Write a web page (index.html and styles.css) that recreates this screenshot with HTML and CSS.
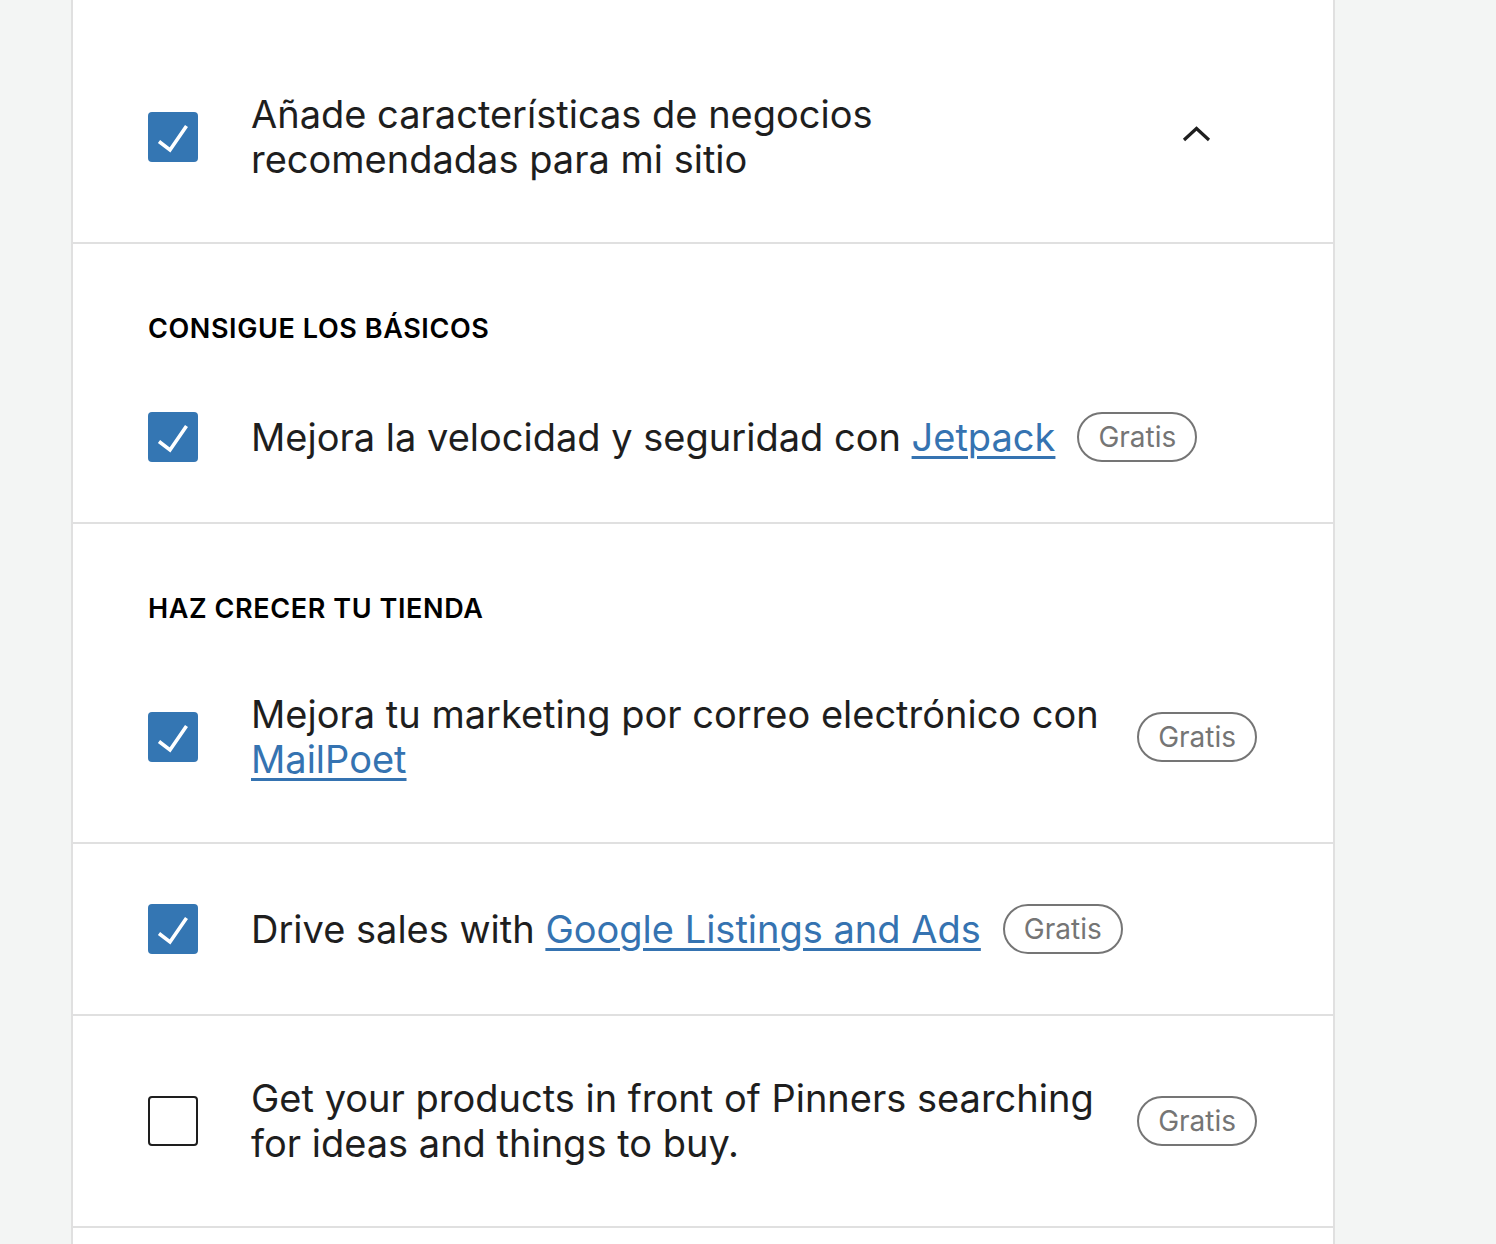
FILE: index.html
```html
<!DOCTYPE html>
<html lang="es">
<head>
<meta charset="utf-8">
<title>Características de negocios</title>
<link rel="stylesheet" href="styles.css">
</head>
<body>
<div class="card">
  <div class="section section-top">
    <div class="item">
      <span class="cb checked"><svg viewBox="0 0 50 50" width="50" height="50"><path d="M11 29.5 L22 38 L38.5 14" fill="none" stroke="#fff" stroke-width="3.6"/></svg></span>
      <span class="label title">Añade características de negocios recomendadas para mi sitio</span>
      <span class="chevron"><svg viewBox="0 0 30 16" width="30" height="16"><path d="M2 14 L14.5 2.5 L27 14" fill="none" stroke="#1e1e1e" stroke-width="3.2"/></svg></span>
    </div>
  </div>
  <div class="section">
    <h3 class="heading">Consigue los básicos</h3>
    <div class="item">
      <span class="cb checked"><svg viewBox="0 0 50 50" width="50" height="50"><path d="M11 29.5 L22 38 L38.5 14" fill="none" stroke="#fff" stroke-width="3.6"/></svg></span>
      <span class="label">Mejora la velocidad y seguridad con <a href="#">Jetpack</a></span>
      <span class="badge">Gratis</span>
    </div>
  </div>
  <div class="section">
    <h3 class="heading">Haz crecer tu tienda</h3>
    <div class="item">
      <span class="cb checked"><svg viewBox="0 0 50 50" width="50" height="50"><path d="M11 29.5 L22 38 L38.5 14" fill="none" stroke="#fff" stroke-width="3.6"/></svg></span>
      <span class="label">Mejora tu marketing por correo electrónico con <a href="#">MailPoet</a></span>
      <span class="badge">Gratis</span>
    </div>
  </div>
  <div class="section">
    <div class="item">
      <span class="cb checked"><svg viewBox="0 0 50 50" width="50" height="50"><path d="M11 29.5 L22 38 L38.5 14" fill="none" stroke="#fff" stroke-width="3.6"/></svg></span>
      <span class="label">Drive sales with <a href="#">Google Listings and Ads</a></span>
      <span class="badge">Gratis</span>
    </div>
  </div>
  <div class="section">
    <div class="item">
      <span class="cb"></span>
      <span class="label">Get your products in front of Pinners searching for ideas and things to buy.</span>
      <span class="badge">Gratis</span>
    </div>
  </div>
  <div class="section section-last"></div>
</div>
</body>
</html>
```

FILE: styles.css
```css
html, body {
  margin: 0;
  padding: 0;
  background: #f3f5f4;
}
body {
  font-family: Inter, "Noto Sans", "Liberation Sans", sans-serif;
  color: #1e1e1e;
}
.card {
  margin-left: 71px;
  width: 1260px;
  background: #fff;
  border-left: 2px solid #e0e0e0;
  border-right: 2px solid #e0e0e0;
}
.section {
  padding: 60px 76px 60px 75px;
  border-bottom: 2px solid #e0e0e0;
}
.section-top {
  padding-top: 92px;
}
.section-last {
  border-bottom: none;
  height: 40px;
  padding: 0;
}
.heading {
  margin: 0 0 58px;
  font-size: 27px;
  line-height: 50px;
  font-weight: 600;
  text-transform: uppercase;
  letter-spacing: 0.6px;
  color: #000;
}
.item {
  display: flex;
  align-items: center;
  gap: 22px;
}
.cb {
  flex: 0 0 auto;
  width: 50px;
  height: 50px;
  box-sizing: border-box;
  border: 2px solid #1e1e1e;
  border-radius: 4px;
  margin-right: 31px;
  display: flex;
}
.cb.checked {
  border: none;
  background: #3476b3;
}
.label {
  flex: 0 1 auto;
  font-size: 38px;
  line-height: 45px;
}
.title {
  max-width: 880px;
  flex: 1 1 auto;
}
.label a {
  color: #3573b1;
  text-decoration: underline;
  text-decoration-thickness: 3px;
  text-underline-offset: 5px;
}
.badge {
  flex: 0 0 auto;
  box-sizing: border-box;
  height: 50px;
  padding: 0 19px;
  border: 2px solid #757575;
  border-radius: 25px;
  color: #757575;
  font-size: 28px;
  line-height: 46px;
}
.chevron {
  margin-left: auto;
  margin-right: 45px;
  display: flex;
  align-items: center;
  margin-top: -6px;
}
```
